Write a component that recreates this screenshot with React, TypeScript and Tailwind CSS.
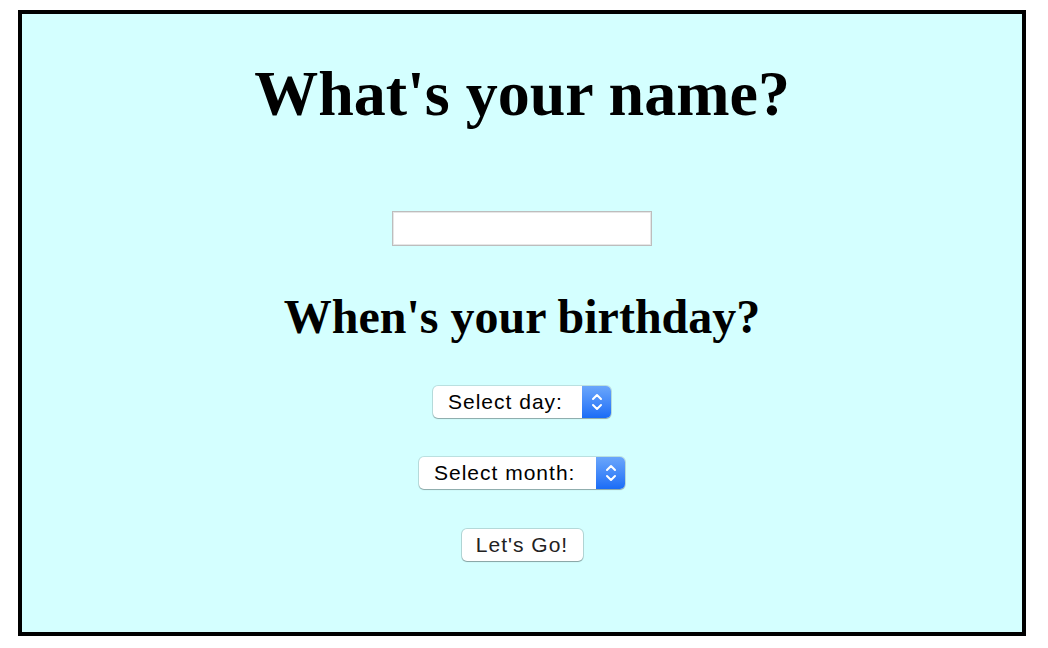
import React from 'react';

const Chevrons = () => (
    <svg width="12" height="20" viewBox="0 0 12 20" fill="none" stroke="white" strokeWidth="2" strokeLinecap="round" strokeLinejoin="round">
        <path d="M2 7 L6 3 L10 7" />
        <path d="M2 13 L6 17 L10 13" />
    </svg>
);

const PopupSelect = ({ label, width }: { label: string; width: string }) => (
    <div
        className={`${width} h-[32px] flex items-stretch bg-white rounded-[5px] shadow-[0_0_0_1px_rgba(0,0,0,0.12),0_1px_1px_rgba(0,0,0,0.25)] overflow-hidden`}
    >
        <span className="flex-1 flex items-center pl-[15px] text-[21px] tracking-[1px] text-black font-['Liberation_Sans',Arial,sans-serif]">
            {label}
        </span>
        <span className="w-[29px] flex items-center justify-center bg-gradient-to-b from-[#6aa6fb] to-[#1a6cf6]">
            <Chevrons />
        </span>
    </div>
);

export default function App() {
    return (
        <div className="pt-[10px] pl-[18px]">
            <div className="w-[1008px] h-[626px] border-4 border-black bg-[#d4ffff] flex flex-col items-center pt-[48px]">
                <h1 className="text-[64px] leading-[64px] font-bold text-black font-['Liberation_Serif','Times_New_Roman',serif]">
                    What's your name?
                </h1>
                <input
                    type="text"
                    className="mt-[85px] w-[260px] h-[35px] bg-white border border-[#bdbdbd] shadow-[inset_0_0_0_1px_#e6e6e6] outline-none"
                />
                <h2 className="mt-[47px] text-[48px] leading-[48px] font-bold text-black font-['Liberation_Serif','Times_New_Roman',serif]">
                    When's your birthday?
                </h2>
                <div className="mt-[45px]">
                    <PopupSelect label="Select day:" width="w-[178px]" />
                </div>
                <div className="mt-[39px]">
                    <PopupSelect label="Select month:" width="w-[206px]" />
                </div>
                <button className="mt-[40px] w-[121px] h-[32px] bg-white rounded-[5px] text-[21px] tracking-[1px] text-[#222] shadow-[0_0_0_1px_rgba(0,0,0,0.15),0_1px_1px_rgba(0,0,0,0.25)] font-['Liberation_Sans',Arial,sans-serif]">
                    Let's Go!
                </button>
            </div>
        </div>
    );
}
